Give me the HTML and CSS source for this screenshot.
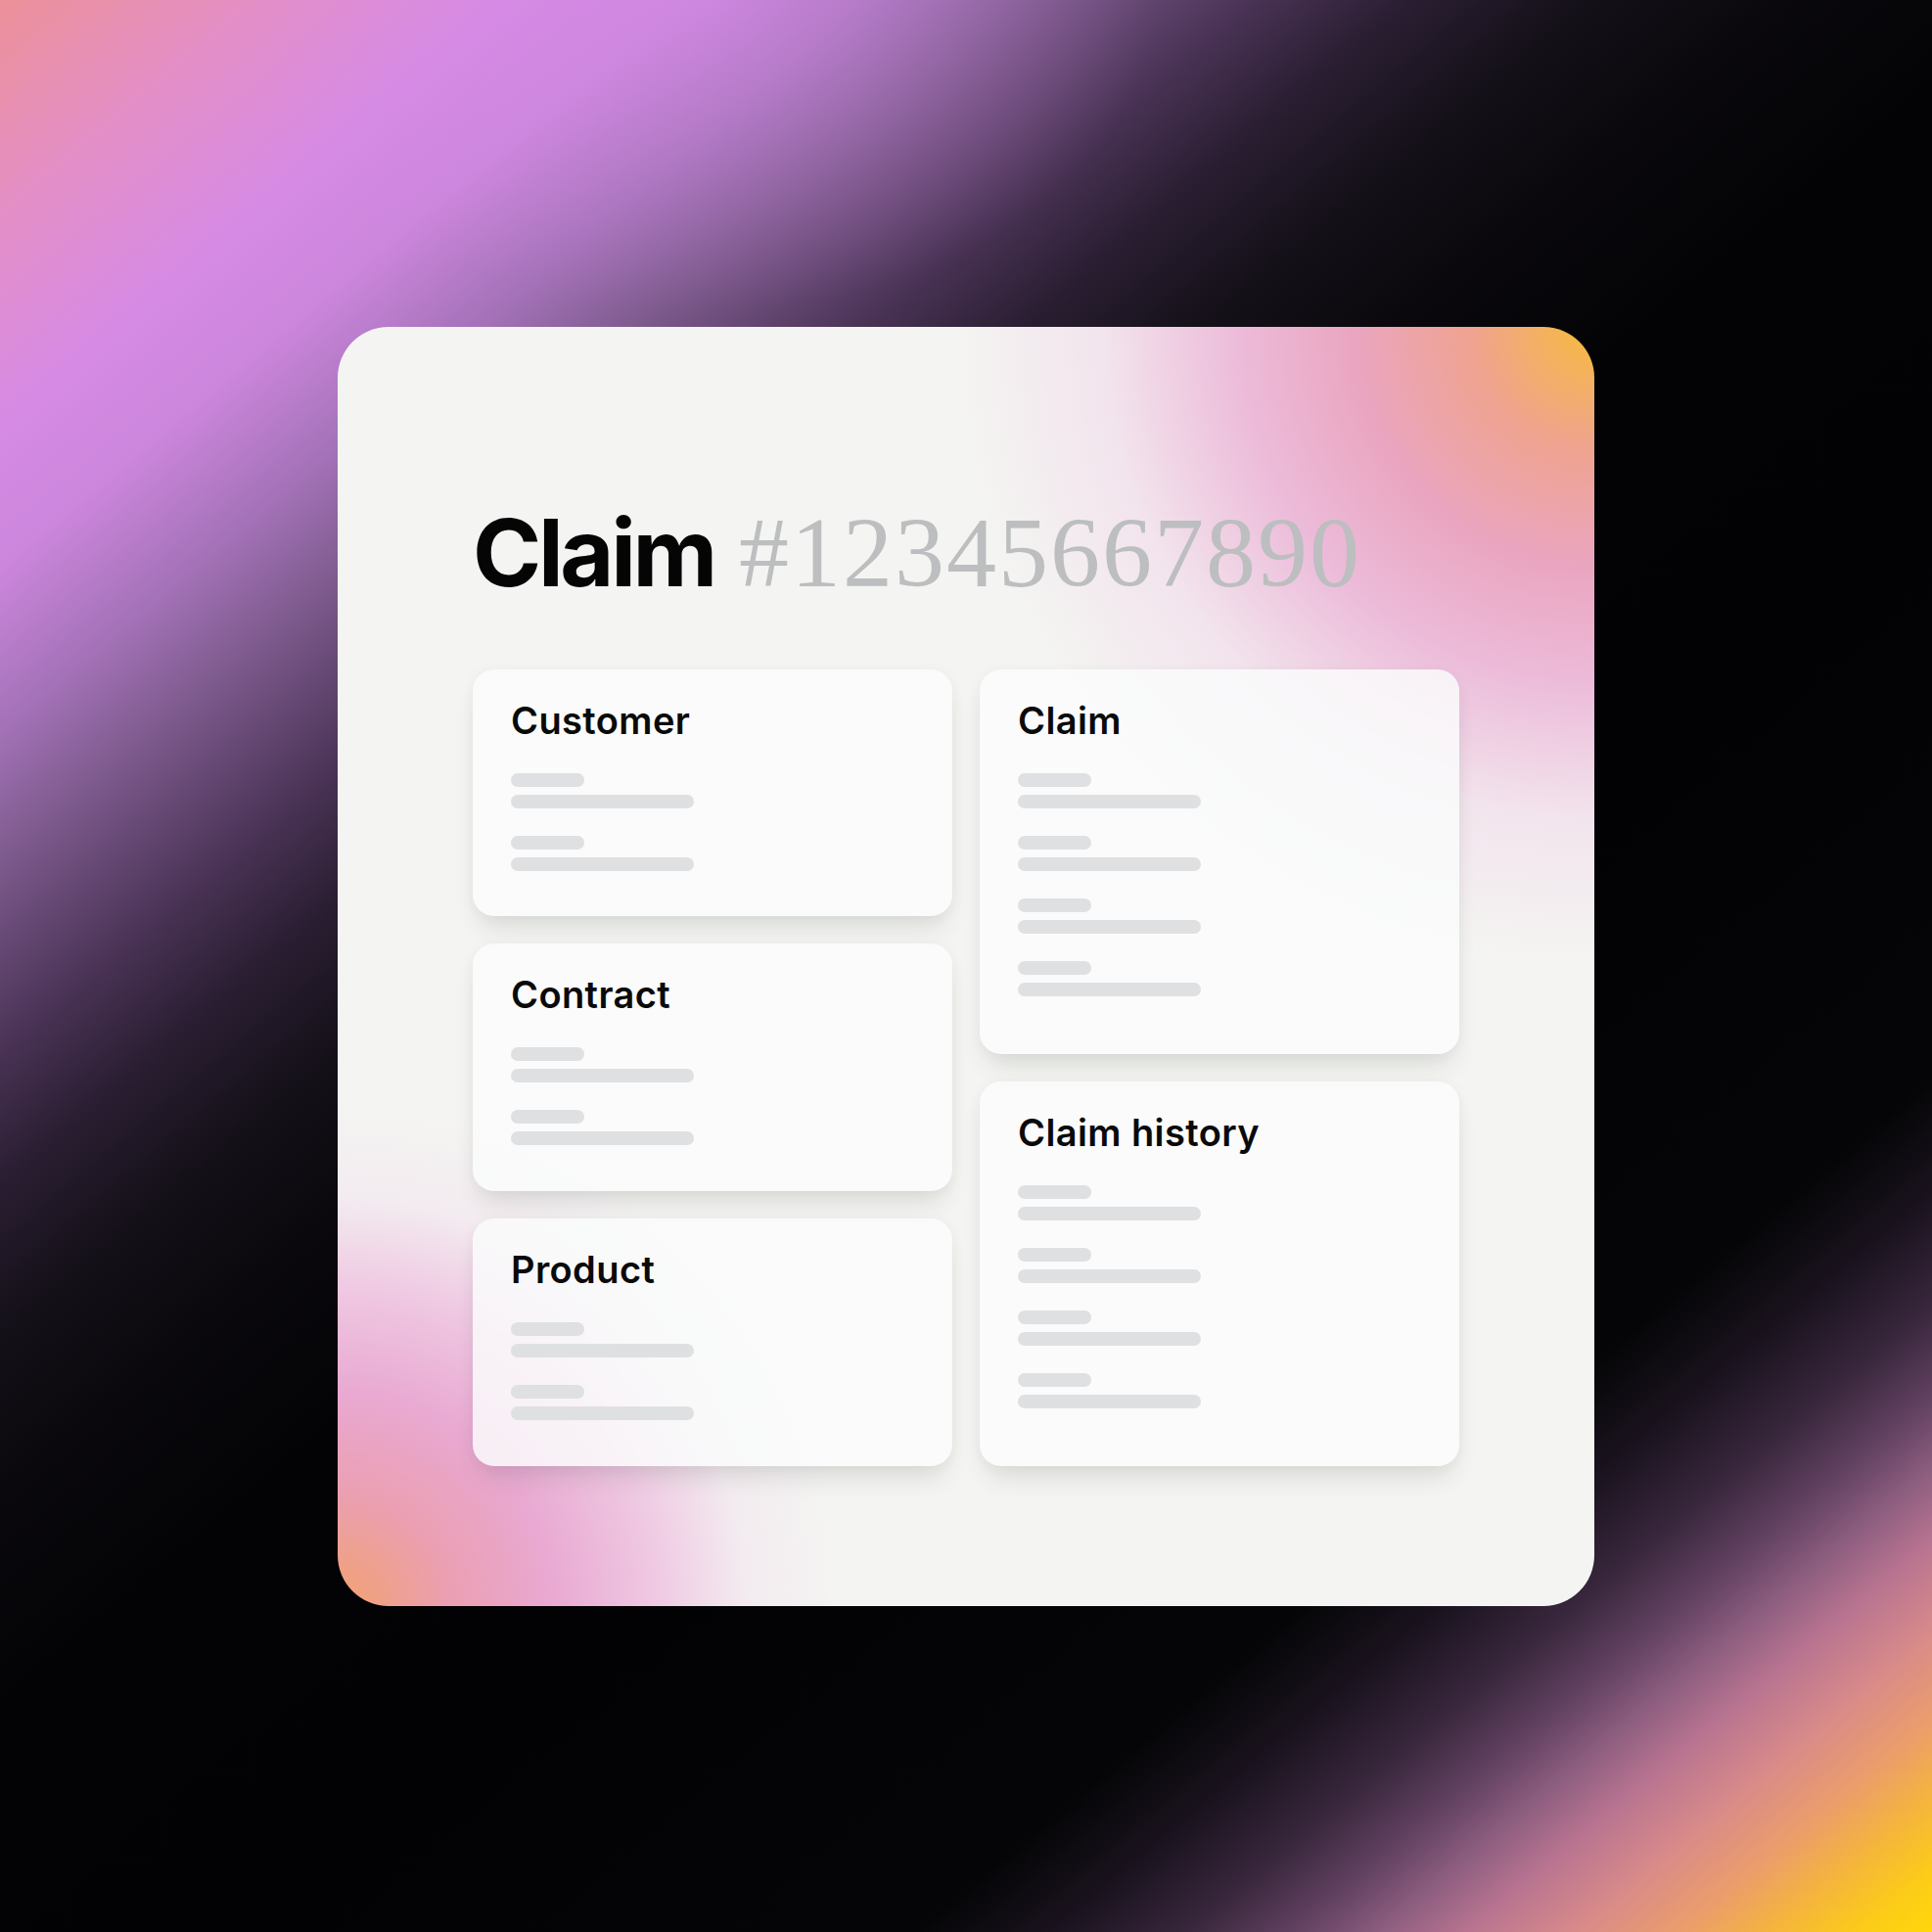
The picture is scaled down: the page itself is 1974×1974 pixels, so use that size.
FILE: index.html
```html
<!DOCTYPE html>
<html lang="en">
<head>
<meta charset="utf-8">
<title>Claim #12345667890</title>
<link rel="stylesheet" href="styles.css">
</head>
<body>
<div class="page">
  <main class="panel">
    <h1 class="title"><span class="title-word">Claim</span><span class="title-num">#12345667890</span></h1>
    <div class="grid">
      <div class="col">
        <section class="card">
          <h2 class="card-title">Customer</h2>
          <div class="fields">
            <div class="field"><span class="bar bar-short"></span><span class="bar bar-long"></span></div>
            <div class="field"><span class="bar bar-short"></span><span class="bar bar-long"></span></div>
          </div>
        </section>
        <section class="card">
          <h2 class="card-title">Contract</h2>
          <div class="fields">
            <div class="field"><span class="bar bar-short"></span><span class="bar bar-long"></span></div>
            <div class="field"><span class="bar bar-short"></span><span class="bar bar-long"></span></div>
          </div>
        </section>
        <section class="card">
          <h2 class="card-title">Product</h2>
          <div class="fields">
            <div class="field"><span class="bar bar-short"></span><span class="bar bar-long"></span></div>
            <div class="field"><span class="bar bar-short"></span><span class="bar bar-long"></span></div>
          </div>
        </section>
      </div>
      <div class="col">
        <section class="card">
          <h2 class="card-title">Claim</h2>
          <div class="fields">
            <div class="field"><span class="bar bar-short"></span><span class="bar bar-long"></span></div>
            <div class="field"><span class="bar bar-short"></span><span class="bar bar-long"></span></div>
            <div class="field"><span class="bar bar-short"></span><span class="bar bar-long"></span></div>
            <div class="field"><span class="bar bar-short"></span><span class="bar bar-long"></span></div>
          </div>
        </section>
        <section class="card">
          <h2 class="card-title">Claim history</h2>
          <div class="fields">
            <div class="field"><span class="bar bar-short"></span><span class="bar bar-long"></span></div>
            <div class="field"><span class="bar bar-short"></span><span class="bar bar-long"></span></div>
            <div class="field"><span class="bar bar-short"></span><span class="bar bar-long"></span></div>
            <div class="field"><span class="bar bar-short"></span><span class="bar bar-long"></span></div>
          </div>
        </section>
      </div>
    </div>
  </main>
</div>
</body>
</html>
```
FILE: styles.css
```css
html, body {
  margin: 0;
  padding: 0;
}

body {
  font-family: Inter, "Liberation Sans", sans-serif;
  background: #000;
}

.page {
  width: 1974px;
  height: 1974px;
  display: flex;
  align-items: center;
  justify-content: center;
  background:
    radial-gradient(ellipse 460px 320px at 720px 0px,
      rgba(212, 138, 230, 0.5) 0%,
      rgba(212, 138, 230, 0) 100%),
    linear-gradient(140deg,
      #ec9098 0%,
      #e48fc6 6%,
      #d68ae4 12%,
      #cc86dc 16%,
      #a472b8 20.5%,
      #805c90 24%,
      #4a3356 29.5%,
      #2a1e32 33.3%,
      #141018 37.6%,
      #0a080d 42%,
      #030305 48%,
      #020204 60%,
      #050507 76%,
      #1c1420 79.5%,
      #3a283e 82.5%,
      #634262 85%,
      #8e5e80 87%,
      #b87490 89%,
      #d88a8a 91.5%,
      #eb9d6c 94%,
      #f5b63a 96.3%,
      #fccc18 98.3%,
      #ffd60a 100%);
}

.panel {
  box-sizing: border-box;
  width: 1284px;
  height: 1307px;
  padding: 180px 138px 0;
  border-radius: 52px;
  background:
    radial-gradient(ellipse 660px 660px at 100% 0%,
      #f6bb3c 0%,
      #efa390 19%,
      #eaa5c0 37%,
      #ecbbd9 55%,
      rgba(241, 214, 233, 0.55) 76%,
      rgba(244, 245, 242, 0) 100%),
    radial-gradient(ellipse 520px 520px at 0% 100%,
      #f2a270 0%,
      #eb9fb2 22%,
      #e9a9d2 42%,
      #efc8e2 62%,
      rgba(242, 225, 238, 0.5) 80%,
      rgba(244, 245, 242, 0) 100%),
    #f4f5f2;
}

.title {
  margin: 0;
  display: flex;
  align-items: baseline;
  gap: 25px;
  font-weight: 400;
}

.title-word {
  font-family: Inter, "Liberation Sans", sans-serif;
  font-weight: 700;
  font-size: 95px;
  line-height: 1;
  letter-spacing: -0.035em;
  color: #050505;
}

.title-num {
  font-family: "Liberation Serif", "Times New Roman", serif;
  font-weight: 400;
  font-size: 102px;
  line-height: 1;
  letter-spacing: 2px;
  color: #bcbebf;
}

.grid {
  margin-top: 68px;
  height: 814px;
  display: grid;
  grid-template-columns: 1fr 1fr;
  gap: 28px;
}

.col {
  display: flex;
  flex-direction: column;
  gap: 28px;
}

.card {
  flex: 1;
  box-sizing: border-box;
  padding: 33px 39px 0;
  border-radius: 22px;
  background: rgba(250, 251, 252, 0.84);
  box-shadow:
    0 18px 26px -8px rgba(60, 66, 60, 0.14),
    0 2px 14px rgba(60, 66, 60, 0.05);
}

.card-title {
  margin: 0;
  font-family: Inter, "Liberation Sans", sans-serif;
  font-weight: 600;
  font-size: 38px;
  line-height: 1;
  letter-spacing: 0.4px;
  color: #0a0a0a;
}

.fields {
  margin-top: 35px;
  display: flex;
  flex-direction: column;
  gap: 28px;
}

.field {
  display: flex;
  flex-direction: column;
  gap: 8px;
}

.bar {
  display: block;
  height: 14px;
  border-radius: 7px;
  background: #dfe0e2;
}

.bar-short {
  width: 75px;
}

.bar-long {
  width: 187px;
}
```
